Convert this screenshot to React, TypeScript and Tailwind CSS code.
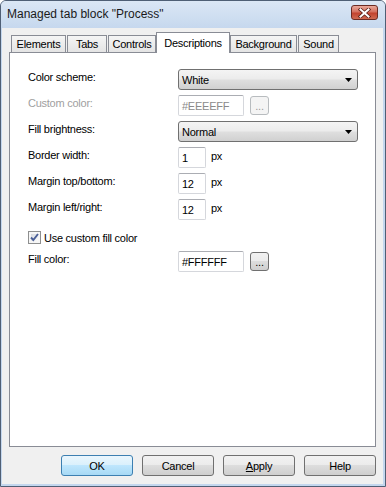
import React from "react";

const tabs = [
  { name: "Elements", cls: "w-[55px]" },
  { name: "Tabs", cls: "ml-[1px] w-[40px]" },
  { name: "Controls", cls: "ml-[1px] w-[48px]" },
  { name: "Descriptions", cls: "w-[74px]", active: true },
  { name: "Background", cls: "w-[67px]" },
  { name: "Sound", cls: "ml-[1px] w-[41px]" },
];

const Label = ({ children, disabled }: { children: React.ReactNode; disabled?: boolean }) => (
  <div className={disabled ? "w-[150px] pt-[2px] leading-[12px] text-[#a0a0a0]" : "w-[150px] pt-[2px] leading-[12px] text-black"}>
    {children}
  </div>
);

const Combo = ({ value }: { value: string }) => (
  <div className="flex h-[21px] w-[180px] items-center justify-between rounded-[3px] border border-[#707070] bg-[linear-gradient(to_bottom,#f4f4f4_0%,#ececec_45%,#dedede_55%,#d0d0d0_100%)] pl-[3px] pr-[5px] leading-[12px]">
    <span>{value}</span>
    <svg width="7" height="4" viewBox="0 0 7 4">
      <path d="M0 0 H7 L3.5 4 Z" fill="#000" />
    </svg>
  </div>
);

const TextBox = ({ value, wide, disabled }: { value: string; wide?: boolean; disabled?: boolean }) => (
  <div
    className={
      (wide ? "w-[66px] " : "w-[28px] ") +
      (disabled ? "text-[#8a8a8a] " : "text-black ") +
      "flex h-[21px] items-center rounded-[2px] border border-[#d5d7dc] border-t-[#abadb3] bg-white pl-[3px] leading-[12px]"
    }
  >
    {value}
  </div>
);

const DotsButton = ({ disabled }: { disabled?: boolean }) =>
  disabled ? (
    <div className="ml-[6px] mt-[1px] flex h-[19px] w-[19px] items-end justify-center rounded-[3px] border border-[#b8bcbf] bg-[#f4f4f4] pb-[3px] leading-[10px] text-[#9a9a9a]">
      ...
    </div>
  ) : (
    <div className="ml-[6px] mt-[1px] flex h-[19px] w-[19px] items-end justify-center rounded-[3px] border border-[#707070] bg-[linear-gradient(to_bottom,#f2f2f2_0%,#ebebeb_50%,#dddddd_50%,#cfcfcf_100%)] pb-[3px] leading-[10px] text-black">
      ...
    </div>
  );

const Px = () => <div className="ml-[5px] pt-[3px] leading-[12px]">px</div>;

const DlgButton = ({ children, primary }: { children: React.ReactNode; primary?: boolean }) => (
  <div
    className={
      primary
        ? "flex h-[21px] w-[72px] items-center justify-center rounded-[3px] border border-[#3c7fb1] bg-[linear-gradient(to_bottom,#eaf6fd_0%,#d9f0fc_50%,#bee6fd_50%,#a7d9f5_100%)] leading-[12px]"
        : "flex h-[21px] w-[72px] items-center justify-center rounded-[3px] border border-[#707070] bg-[linear-gradient(to_bottom,#f2f2f2_0%,#ebebeb_50%,#dddddd_50%,#cfcfcf_100%)] leading-[12px]"
    }
  >
    {children}
  </div>
);

export default function App() {
  return (
    <div className="flex h-[487px] w-[386px] flex-col overflow-hidden rounded-t-[6px] border border-[#4f5f75] bg-[#c4d7ee] font-['Liberation_Sans',Arial,sans-serif] text-[11px] tracking-[-0.25px] text-black">
      {/* title bar */}
      <div className="flex h-[27px] shrink-0 justify-between bg-linear-to-b from-[#dbe7f5] to-[#c6d8ee] pl-[6px] pr-[7px]">
        <div className="self-center pb-[1px] text-[12px] leading-[14px] tracking-normal text-[#1a1a1a]">
          Managed tab block "Process"
        </div>
        <div className="mt-[4px] flex h-[15px] w-[27px] items-center justify-center rounded-[3px] border border-[#6b2b23] bg-[linear-gradient(to_bottom,#e9a99b_0%,#d4705f_45%,#c2432f_55%,#cf6a52_100%)]">
          <svg width="13" height="10" viewBox="0 0 13 10">
            <path d="M2.5 1.5 L10.5 8.5 M10.5 1.5 L2.5 8.5" stroke="#5a2018" strokeWidth="3.6" strokeLinecap="square" />
            <path d="M2.5 1.5 L10.5 8.5 M10.5 1.5 L2.5 8.5" stroke="#ffffff" strokeWidth="2" strokeLinecap="square" />
          </svg>
        </div>
      </div>

      {/* client */}
      <div className="ml-[1px] mr-[2px] mb-[2px] flex flex-1 flex-col bg-[#f0f0f0] pl-[7px] pr-[7px] pt-[4px] pb-[8px]">
        <div className="relative z-10 -mb-px flex h-[21px] items-end pl-[2px]">
          {tabs.map((t) =>
            t.active ? (
              <div
                key={t.name}
                className={t.cls + " flex h-[21px] items-center justify-center border border-b-0 border-[#898c95] bg-white leading-[12px]"}
              >
                {t.name}
              </div>
            ) : (
              <div
                key={t.name}
                className={t.cls + " mb-[1px] flex h-[17px] items-center justify-center border border-b-0 border-[#898c95] bg-linear-to-b from-[#f5f5f5] to-[#e4e4e4] leading-[12px]"}
              >
                {t.name}
              </div>
            )
          )}
        </div>

        <div className="flex flex-1 flex-col gap-[5px] border border-[#898c95] bg-white pl-[18px] pt-[16px]">
          <div className="flex h-[21px] items-start">
            <Label>Color scheme:</Label>
            <Combo value="White" />
          </div>
          <div className="flex h-[21px] items-start">
            <Label disabled>Custom color:</Label>
            <TextBox value="#EEEEFF" wide disabled />
            <DotsButton disabled />
          </div>
          <div className="flex h-[21px] items-start">
            <Label>Fill brightness:</Label>
            <Combo value="Normal" />
          </div>
          <div className="flex h-[21px] items-start">
            <Label>Border width:</Label>
            <TextBox value="1" />
            <Px />
          </div>
          <div className="flex h-[21px] items-start">
            <Label>Margin top/bottom:</Label>
            <TextBox value="12" />
            <Px />
          </div>
          <div className="flex h-[21px] items-start">
            <Label>Margin left/right:</Label>
            <TextBox value="12" />
            <Px />
          </div>
          <div className="flex h-[21px] items-start pt-[6px]">
            <div className="flex h-[13px] items-center">
              <div className="relative h-[13px] w-[13px] border border-[#8e8f8f] bg-[#f6f6f6]">
                <div className="absolute inset-[2px] bg-linear-to-br from-[#d6d9de] to-[#fbfbfb]" />
                <svg className="absolute left-0 top-0" width="11" height="11" viewBox="0 0 11 11">
                  <path d="M2 5.5 L4.3 8 L9 2" fill="none" stroke="#4a5f97" strokeWidth="1.9" />
                </svg>
              </div>
              <span className="ml-[3px] leading-[12px]">Use custom fill color</span>
            </div>
          </div>
          <div className="flex h-[21px] items-start">
            <Label>Fill color:</Label>
            <TextBox value="#FFFFFF" wide />
            <DotsButton />
          </div>
        </div>

        <div className="mt-[8px] flex h-[21px] shrink-0 justify-end gap-[9px]">
          <DlgButton primary>OK</DlgButton>
          <DlgButton>Cancel</DlgButton>
          <DlgButton>
            <span className="underline">A</span>pply
          </DlgButton>
          <DlgButton>Help</DlgButton>
        </div>
      </div>
    </div>
  );
}
